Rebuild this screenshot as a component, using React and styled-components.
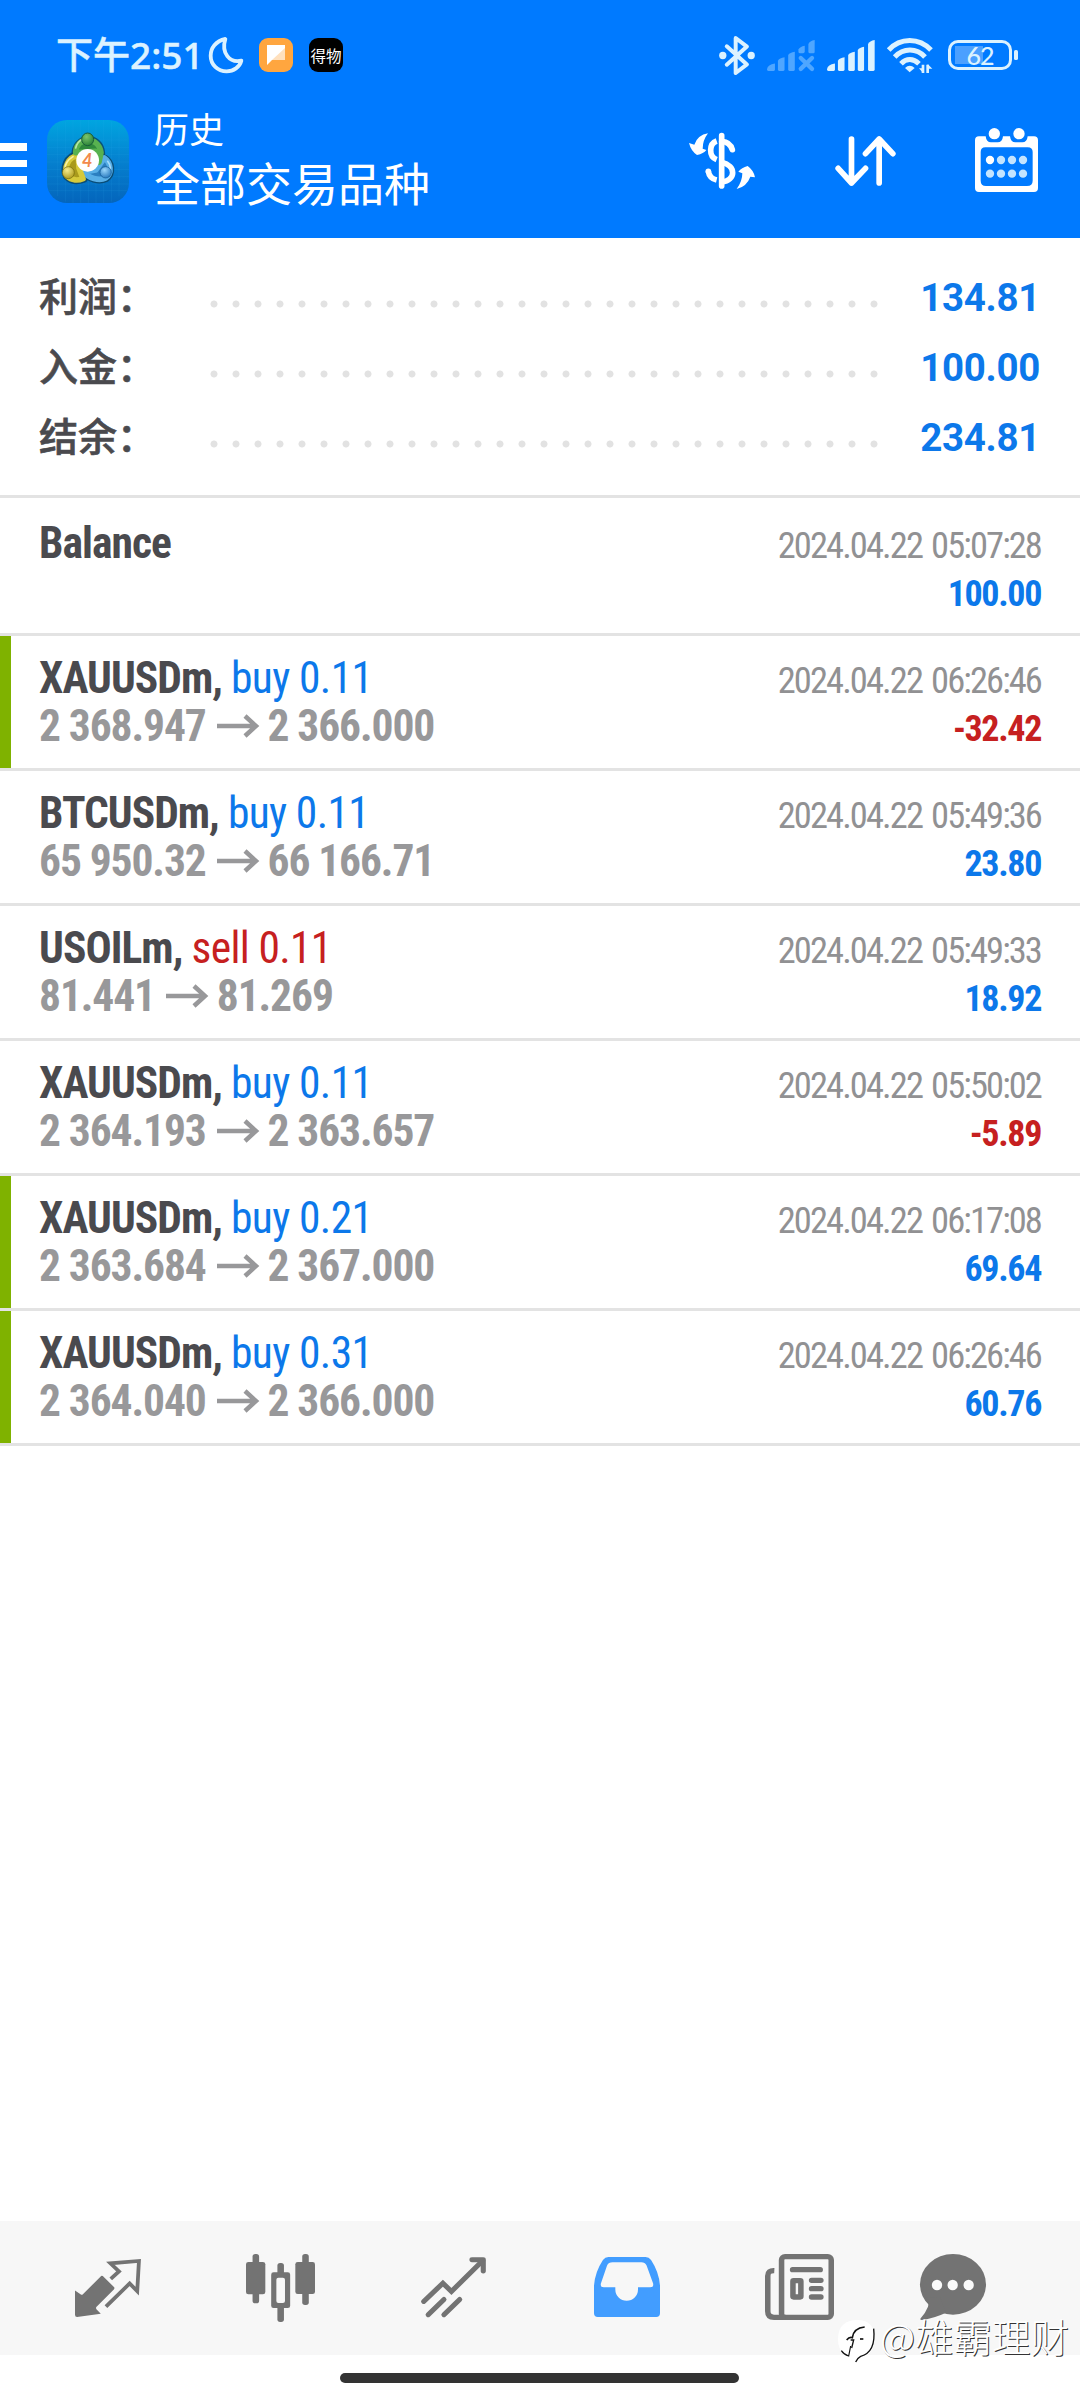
import styled, { createGlobalStyle, css } from 'styled-components';

const GlobalStyle = createGlobalStyle`
  * {
    box-sizing: border-box;
  }
  body {
    margin: 0;
    background: #fff;
  }
  svg {
    display: block;
    flex: none;
    overflow: visible;
  }
`;

const condensed = css`
  font-family: "Roboto Condensed", Roboto, sans-serif;
  font-stretch: 75%;
`;

const Screen = styled.div`
  display: flex;
  flex-direction: column;
  width: 1080px;
  height: 2400px;
  background: #fff;
  overflow: hidden;
  font-family: Roboto, "Noto Sans CJK SC", sans-serif;
`;

const Header = styled.header`
  height: 238px;
  background: #007aff;
  color: #fff;
`;

const StatusBar = styled.div`
  display: flex;
  align-items: center;
  height: 110px;
  padding: 0 62px 0 56px;
`;

const Clock = styled.span`
  font-family: "Noto Sans", "Noto Sans CJK SC", sans-serif;
  font-size: 37px;
  font-weight: 500;
  line-height: 50px;
  color: #dcf2ff;
  -webkit-text-stroke: 0.5px #dcf2ff;
  width: 153px;
  white-space: nowrap;
`;

const Badge = styled.span`
  display: flex;
  align-items: center;
  justify-content: center;
  width: 34px;
  height: 34px;
  margin-left: 16px;
  border-radius: 9px;
  background: ${props => props.$color};
  color: #fff;
  font: 400 15.5px/34px "Noto Sans CJK SC", sans-serif;
`;

const StatusIcons = styled.div`
  display: flex;
  align-items: center;
  gap: 12px;
  margin-left: auto;
`;

const Battery = styled.div`
  display: flex;
  align-items: center;
  justify-content: center;
  width: 64px;
  height: 30px;
  margin: 0 2px 0 3px;
  border: 3px solid #dcf2ff;
  border-radius: 10px;
  background: linear-gradient(#4ba0ff, #4ba0ff) 4px center / 28px 18px no-repeat;
  color: #dcf2ff;
  font: 500 25px/24px Lato, sans-serif;
  letter-spacing: -1px;
`;

const Toolbar = styled.div`
  display: flex;
  align-items: flex-start;
  height: 128px;
  padding-right: 42px;
`;

const Burger = styled.div`
  display: flex;
  flex-direction: column;
  gap: 9px;
  width: 27px;
  margin: 33px 20px 0 0;

  span {
    height: 7.5px;
    background: #fff;
  }
`;

const Titles = styled.div`
  display: flex;
  flex-direction: column;
  margin: -5px auto 0 25px;
  font-family: "Noto Sans CJK SC", sans-serif;
`;

const Title = styled.div`
  font-size: ${props => props.$size}px;
  line-height: ${props => props.$line}px;
`;

const Tool = styled.div`
  margin: ${props => props.$top}px 0 0 ${props => props.$gap}px;
`;

const Summary = styled.section`
  height: 257px;
  padding: 24px 40px 0 39px;
`;

const SummaryRow = styled.div`
  display: flex;
  align-items: center;
  height: 70px;
`;

const SummaryLabel = styled.span`
  width: 164px;
  padding-bottom: 5px;
  font-family: "Noto Sans CJK SC", sans-serif;
  font-size: 39px;
  font-weight: 500;
  line-height: 65px;
  color: #4a4a4e;
  -webkit-text-stroke: 0.6px #4a4a4e;
`;

const Dots = styled.span`
  width: 682px;
  height: 22px;
  margin-top: 13px;
  background: radial-gradient(circle, #e2e2e2 3.1px, transparent 3.9px) 0 0 / 22px 22px;
`;

const SummaryValue = styled.span`
  margin-left: auto;
  padding-top: 1px;
  font-size: 38.5px;
  font-weight: 700;
  letter-spacing: -0.3px;
  line-height: 69px;
  color: #0c78ea;
`;

const Deals = styled.section`
  flex: 1;
`;

const Divider = styled.div`
  height: 3px;
  background: #e3e3e3;
`;

const Deal = styled.div`
  display: flex;
  justify-content: space-between;
  height: ${props => (props.$first ? 135 : 132)}px;
  padding: ${props => (props.$first ? 21 : 18)}px 39px 0 28px;
  border-left: 11px solid ${props => (props.$marked ? '#7fb200' : 'transparent')};
`;

const DealLine = styled.div`
  ${condensed}
  display: flex;
  align-items: center;
  height: 48px;
  font-size: 43.5px;
  font-weight: 700;
  letter-spacing: ${props => props.$spacing}px;
  line-height: 47px;
  color: ${props => props.$color};
  white-space: pre;
`;

const Volume = styled.span`
  font-weight: 400;
  letter-spacing: -0.65px;
  color: ${props => (props.$type === 'sell' ? '#c62020' : '#0c78ea')};
`;

const DealRight = styled.div`
  ${condensed}
  padding-top: 3px;
  font-size: 36.5px;
  letter-spacing: -1.9px;
  word-spacing: 2.5px;
  line-height: 48px;
  text-align: right;
  color: #919193;
`;

const Amount = styled.div`
  font-size: 36px;
  font-weight: 700;
  letter-spacing: -1.35px;
  color: ${props => (props.$negative ? '#c62020' : '#0c78ea')};
`;

const TabBar = styled.nav`
  display: flex;
  height: 134px;
  padding-left: 21px;
  background: #f7f7f7;
`;

const Tab = styled.div`
  display: flex;
  justify-content: center;
  width: ${props => props.$width || 173}px;
  padding-top: ${props => props.$top}px;
`;

const HomeArea = styled.div`
  display: flex;
  justify-content: center;
  height: 45px;
  padding: 18px 2px 0 0;

  span {
    width: 399px;
    height: 10px;
    border-radius: 5px;
    background: #333;
  }
`;

const Watermark = styled.div`
  position: absolute;
  left: 838px;
  top: 2306px;
  display: flex;
  align-items: center;
  gap: 4px;
  font: 300 38.5px/52px "Noto Sans CJK SC", sans-serif;
  color: #fff;
  text-shadow: 1px 1px 0 #333;
  white-space: nowrap;

  svg {
    margin-top: 14px;
  }
`;

const summary = [
  { label: '利润：', value: '134.81' },
  { label: '入金：', value: '100.00' },
  { label: '结余：', value: '234.81' },
];

const deals = [
  { symbol: 'Balance', time: '2024.04.22 05:07:28', amount: '100.00' },
  { symbol: 'XAUUSDm', type: 'buy', volume: '0.11', open: '2 368.947', close: '2 366.000', time: '2024.04.22 06:26:46', amount: '-32.42', marked: true },
  { symbol: 'BTCUSDm', type: 'buy', volume: '0.11', open: '65 950.32', close: '66 166.71', time: '2024.04.22 05:49:36', amount: '23.80' },
  { symbol: 'USOILm', type: 'sell', volume: '0.11', open: '81.441', close: '81.269', time: '2024.04.22 05:49:33', amount: '18.92' },
  { symbol: 'XAUUSDm', type: 'buy', volume: '0.11', open: '2 364.193', close: '2 363.657', time: '2024.04.22 05:50:02', amount: '-5.89' },
  { symbol: 'XAUUSDm', type: 'buy', volume: '0.21', open: '2 363.684', close: '2 367.000', time: '2024.04.22 06:17:08', amount: '69.64', marked: true },
  { symbol: 'XAUUSDm', type: 'buy', volume: '0.31', open: '2 364.040', close: '2 366.000', time: '2024.04.22 06:26:46', amount: '60.76', marked: true },
];

const MoonIcon = () => (
  <svg width="34" height="36" viewBox="0 0 102 108" fill="none" stroke="#dcf2ff" strokeWidth="11.5" strokeLinejoin="round">
    <path d="M49 6 C20 12 5 34 5 56 C5 83 26 103 53 103 C74 103 92 90 97 71 C62 79 36 48 49 6Z" />
  </svg>
);

const BluetoothIcon = () => (
  <svg width="36" height="39" viewBox="0 0 108 118" fill="none" stroke="#dcf2ff" strokeWidth="12" strokeLinejoin="round" strokeLinecap="round">
    <path d="M23 31 L84 86 L50 112 V6 L84 32 L23 87" />
    <circle cx="11" cy="59" r="11" fill="#dcf2ff" stroke="none" />
    <circle cx="97" cy="59" r="11" fill="#dcf2ff" stroke="none" />
  </svg>
);

const SignalIcon = ({ off }) => (
  <svg width="48" height="31" viewBox="0 0 145 93" fill={off ? '#4fa6ff' : '#dcf2ff'}>
    <path d="M0 88 Q2 74 24 71 V89 Q24 93 20 93 H4 Q0 93 0 88Z" />
    <path d="M33 62 Q38 54 53 52 V89 Q53 93 49 93 H37 Q33 93 33 89Z" />
    <path d="M64 45 Q69 37 84 35 V89 Q84 93 80 93 H68 Q64 93 64 89Z" />
    {off ? (
      <>
        <path d="M95 28 Q99 20 114 17 V34 Q114 40 109 40 H100 Q95 40 95 35Z" />
        <path d="M125 12 Q129 3 144 0 V35 Q144 40 140 40 H130 Q125 40 125 35Z" />
        <path d="M102 54 L136 87 M136 54 L102 87" stroke="#4fa6ff" strokeWidth="13" strokeLinecap="round" />
      </>
    ) : (
      <>
        <path d="M93 30 Q98 22 112 20 V89 Q112 93 108 93 H97 Q93 93 93 89Z" />
        <path d="M124 12 Q129 3 144 0 V89 Q144 93 140 93 H128 Q124 93 124 89Z" />
      </>
    )}
  </svg>
);

const WifiIcon = () => (
  <svg width="46" height="35" viewBox="0 0 138 105" fill="none" stroke="#dcf2ff" strokeWidth="15">
    <path d="M5 36 C40 -2 96 -2 132 36" />
    <path d="M23 57 C49 29 89 29 114 57" />
    <path d="M42 77 C58 60 79 60 96 77" />
    <path d="M54 90 Q68 76 83 90 L68 103Z" fill="#dcf2ff" stroke="none" />
    <path d="M108 80 V105 M122 80 V105" strokeWidth="8" />
    <path d="M96 91 H108 V105Z M122 78 L136 92 H122Z" fill="#dcf2ff" stroke="none" />
  </svg>
);

const BatteryTip = () => (
  <svg width="4" height="10" viewBox="0 0 4 10">
    <rect width="4" height="10" rx="1.6" fill="#dcf2ff" />
  </svg>
);

const ChatBadgeIcon = () => (
  <svg width="20" height="20" viewBox="0 0 20 20">
    <path d="M1 0 H19 V15 H6 L1 20Z" fill="#fff" />
    <path d="M19 3 V15 H6Z" fill="#ffe0bd" />
  </svg>
);

const LogoIcon = () => (
  <svg width="82" height="83" viewBox="0 0 246 249">
    <defs>
      <linearGradient id="logoBg" x1="0.5" y1="0" x2="0.5" y2="1">
        <stop offset="0" stopColor="#00a5e0" />
        <stop offset="0.5" stopColor="#0580cf" />
        <stop offset="1" stopColor="#0465bc" />
      </linearGradient>
      <radialGradient id="logoGreen" cx="0.4" cy="0.3" r="0.8">
        <stop offset="0" stopColor="#7cc56c" />
        <stop offset="1" stopColor="#1f7a31" />
      </radialGradient>
      <radialGradient id="logoYellow" cx="0.4" cy="0.3" r="0.8">
        <stop offset="0" stopColor="#f6ec8c" />
        <stop offset="1" stopColor="#a89312" />
      </radialGradient>
      <radialGradient id="logoBlue" cx="0.4" cy="0.3" r="0.8">
        <stop offset="0" stopColor="#9ad6fb" />
        <stop offset="1" stopColor="#1a6fb8" />
      </radialGradient>
    </defs>
    <rect width="246" height="249" rx="60" fill="url(#logoBg)" />
    <path
      d="M32 20 V229 M55 4 V245 M78 0 V249 M101 0 V249 M124 0 V249 M147 0 V249 M170 0 V249 M193 4 V245 M216 20 V229 M4 60 H242 M0 82 H246 M0 104 H246 M0 126 H246 M0 148 H246 M0 170 H246 M0 192 H246 M6 212 H240"
      stroke="#3fb6ee"
      strokeOpacity="0.18"
      strokeWidth="2"
    />
    <g strokeWidth="17" strokeLinecap="round" strokeLinejoin="round">
      <g stroke="#0b4262" strokeOpacity="0.8" strokeWidth="25" fill="none">
        <path d="M86 104 C84 50 158 44 162 100 L158 126" />
        <path d="M94 104 C58 112 50 144 60 168 C74 182 94 182 110 176" />
        <path d="M172 116 C192 128 196 160 176 174 C156 184 124 174 112 156" />
      </g>
      <path d="M172 114 C192 128 196 160 176 174 C156 184 124 174 110 156 L146 150Z" stroke="#57aee6" fill="#2b7fc0" />
      <path d="M94 106 C62 112 50 144 60 168 C74 182 94 182 108 176 L96 144Z" stroke="#d6c93a" fill="#a99a1c" />
      <path d="M86 98 C86 50 156 46 162 98 L156 126 L146 94Z" stroke="#58b150" fill="#2f8a3c" />
      <g fill="none" strokeWidth="5">
        <path d="M86 84 C90 68 98 62 106 58" stroke="#b7e6a6" />
        <path d="M78 110 C62 120 54 134 54 146" stroke="#f7f0a4" />
        <path d="M182 124 C192 136 192 152 186 162" stroke="#a8dcfb" />
      </g>
    </g>
    <ellipse cx="122" cy="58" rx="18" ry="19" fill="url(#logoGreen)" stroke="#1a5d3a" strokeWidth="3" />
    <circle cx="64" cy="158" r="18" fill="url(#logoYellow)" stroke="#71680e" strokeWidth="2" />
    <circle cx="176" cy="157" r="17" fill="url(#logoBlue)" stroke="#11568f" strokeWidth="2" />
    <circle cx="122" cy="121" r="34" fill="#fff" />
    <text x="121" y="140" textAnchor="middle" fontFamily="Lato, sans-serif" fontWeight="700" fontStyle="italic" fontSize="54" fill="#f28a4c">4</text>
  </svg>
);

const CurrencyIcon = () => (
  <svg width="66" height="56" viewBox="0 0 198 168" fill="none" stroke="#fff" strokeWidth="17">
    <path d="M98 8 V159" strokeLinecap="round" />
    <path d="M83 24 C60 32 58 70 83 80" />
    <path d="M98 25 C114 26 126 36 130 50" strokeLinecap="round" />
    <path d="M98 88 C142 98 142 142 98 147" />
    <path d="M58 115 C60 128 70 138 83 141" />
    <circle cx="58" cy="115" r="8.5" fill="#fff" stroke="none" />
    <path d="M57 1 Q41 22 41 47 L52 51 Q44 62 24 66 Q6 54 0 30 L16 35 Q26 6 57 1Z" fill="#fff" stroke="none" />
    <path d="M143 168 Q160 145 160 121 L148 116 Q158 104 176 99 Q194 112 198 133 L184 131 Q174 160 143 168Z" fill="#fff" stroke="none" />
  </svg>
);

const SortIcon = () => (
  <svg width="61" height="50" viewBox="0 0 182 150" fill="none" stroke="#fff" strokeWidth="17" strokeLinecap="round" strokeLinejoin="round">
    <path d="M49 9 V141 M9 97 L49 141 L91 97" />
    <path d="M132 141 V9 M91 53 L132 9 L173 53" />
  </svg>
);

const CalendarIcon = () => (
  <svg width="63" height="64" viewBox="0 0 189 192">
    <path
      fillRule="evenodd"
      d="M12 25 H32 Q34 43 48 43 H68 Q82 43 84 25 H105 Q107 43 121 43 H142 Q156 43 158 25 H177 Q189 25 189 37 V180 Q189 192 177 192 H12 Q0 192 0 180 V37 Q0 25 12 25Z M31 58 Q17 58 17 72 V158 Q17 174 33 174 H156 Q173 174 173 158 V72 Q173 58 158 58Z"
      fill="#fff"
    />
    <circle cx="58" cy="17" r="17" fill="#fff" />
    <circle cx="132" cy="17" r="17" fill="#fff" />
    {[96, 137].map(cy => [45, 78, 111, 144].map(cx => (
      <circle key={`${cx}-${cy}`} cx={cx} cy={cy} r="12.5" fill={cx === 45 && cy === 96 ? '#fff' : '#c3e4ff'} />
    )))}
  </svg>
);

const PriceArrow = () => (
  <svg width="44" height="22" viewBox="0 0 44 22" fill="none" stroke="#98989a" strokeWidth="4.5">
    <path d="M2 11 H41 M30 1 L41 11 L30 21" />
  </svg>
);

const QuotesIcon = () => (
  <svg width="66" height="58" viewBox="0 0 192 173" preserveAspectRatio="none" fill="#737373">
    <path d="M78 50 Q81 50 83 53 L114 84 Q116 87 113 91 L62 143 Q60 147 63 151 L75 163 L6 173 Q0 173 0 166 V94 L17 106 Q20 108 23 105 L74 53 Q76 50 78 50Z" />
    <path d="M104 59 L128 37 L103 13 L186 6 L181 96 L159 73 L90 142" fill="none" stroke="#737373" strokeWidth="11" />
  </svg>
);

const CandlesIcon = () => (
  <svg width="69" height="68" viewBox="0 0 200 204" preserveAspectRatio="none" fill="#737373">
    <rect x="19" width="19" height="148" rx="8" />
    <rect y="24" width="56" height="97" rx="7" />
    <rect x="163" width="19" height="153" rx="8" />
    <rect x="143" y="24" width="57" height="96" rx="7" />
    <rect x="91" y="27" width="19" height="177" rx="8" />
    <rect x="73" y="55" width="55" height="107" rx="7" />
    <rect x="88" y="71" width="25" height="76" rx="6" fill="#f7f7f7" />
  </svg>
);

const TrendIcon = () => (
  <svg width="65" height="60" viewBox="0 0 190 181" preserveAspectRatio="none" fill="none" stroke="#737373" strokeWidth="15" strokeLinecap="round">
    <path d="M8 134 L64 79 L89 104 L180 11" />
    <path d="M149 8 H182 V42" strokeLinejoin="round" />
    <path d="M21 174 L67 128 M67 174 L113 128" />
  </svg>
);

const InboxIcon = () => (
  <svg width="66" height="60" viewBox="0 0 192 181" preserveAspectRatio="none">
    <path
      fillRule="evenodd"
      d="M42 0 H150 Q160 0 166 9 Q189 45 192 86 V170 Q192 181 181 181 H11 Q0 181 0 170 V86 Q3 45 26 9 Q32 0 42 0Z M54 16 Q42 16 38 26 L20 80 Q18 91 28 91 H62 V98 A33 34 0 0 0 128 98 V91 H164 Q174 91 172 80 L153 26 Q148 16 138 16Z"
      fill="#429dff"
    />
  </svg>
);

const NewsIcon = () => (
  <svg width="69" height="66" viewBox="0 0 200 198" preserveAspectRatio="none" fill="none" stroke="#737373" strokeWidth="16">
    <rect x="48" y="8" width="144" height="182" rx="10" />
    <path d="M27 50 Q8 49 8 66 V172 Q8 190 26 190 H60" />
    <path d="M80 47 H160 M135 79 H162 M135 104 H162 M135 129 H162" strokeLinecap="round" />
    <rect x="81" y="80" width="23" height="49" rx="2" />
  </svg>
);

const ChatIcon = () => (
  <svg width="66" height="66" viewBox="0 0 198 198">
    <ellipse cx="99" cy="91" rx="99" ry="91" fill="#737373" />
    <path d="M16 132 Q30 145 24 158 Q16 178 1 194 Q0 198 5 198 Q42 193 78 176 L60 130Z" fill="#737373" />
    {[51, 98, 146].map(cx => (
      <circle key={cx} cx={cx} cy="93" r="15.5" fill="#fafafa" />
    ))}
  </svg>
);

const WatermarkIcon = () => (
  <svg width="38" height="44" viewBox="0 0 114 132" fill="none">
    <path d="M58 0 C95 0 109 20 109 54 C109 90 96 107 68 110 Q60 116 54 127 L58 112 C20 112 0 95 0 58 C0 18 22 0 58 0Z" fill="#fff" />
    <path d="M107 26 C112 72 102 100 68 109 Q58 114 53 126" stroke="#111" strokeWidth="4" />
    <path d="M10 92 Q18 104 32 108 L38 78" stroke="#111" strokeWidth="3.5" />
    <path d="M26 60 Q34 50 43 53 Q47 24 80 21" stroke="#111" strokeWidth="5" />
    <path d="M38 60 H47 L41 84" stroke="#111" strokeWidth="4" />
    <path d="M66 57 H76" stroke="#111" strokeWidth="5" />
  </svg>
);

const tabs = [
  { Icon: QuotesIcon, top: 38 },
  { Icon: CandlesIcon, top: 33 },
  { Icon: TrendIcon, top: 36 },
  { Icon: InboxIcon, top: 36 },
  { Icon: NewsIcon, top: 33 },
  { Icon: ChatIcon, top: 33, width: 133 },
];

const DealRow = ({ deal, first }) => (
  <>
    <Deal $first={first} $marked={deal.marked}>
      <div>
        <DealLine $color="#4a4a4e" $spacing={-0.95}>
          {deal.type ? `${deal.symbol}, ` : deal.symbol}
          {deal.type && <Volume $type={deal.type}>{`${deal.type} ${deal.volume}`}</Volume>}
        </DealLine>
        {deal.open && (
          <DealLine $color="#98989a" $spacing={-1.1}>
            {`${deal.open} `}
            <PriceArrow />
            {` ${deal.close}`}
          </DealLine>
        )}
      </div>
      <DealRight>
        <div>{deal.time}</div>
        <Amount $negative={deal.amount.startsWith('-')}>{deal.amount}</Amount>
      </DealRight>
    </Deal>
    <Divider />
  </>
);

const App = () => (
  <Screen>
    <GlobalStyle />
    <Header>
      <StatusBar>
        <Clock>下午2:51</Clock>
        <MoonIcon />
        <Badge $color="#ffa63f"><ChatBadgeIcon /></Badge>
        <Badge $color="#000">得物</Badge>
        <StatusIcons>
          <BluetoothIcon />
          <SignalIcon off />
          <SignalIcon />
          <WifiIcon />
          <Battery>62</Battery>
        </StatusIcons>
        <BatteryTip />
      </StatusBar>
      <Toolbar>
        <Burger>
          <span />
          <span />
          <span />
        </Burger>
        <Tool $top={10} $gap={0}><LogoIcon /></Tool>
        <Titles>
          <Title $size={35} $line={45}>历史</Title>
          <Title $size={46} $line={63}>全部交易品种</Title>
        </Titles>
        <Tool $top={23} $gap={0}><CurrencyIcon /></Tool>
        <Tool $top={26} $gap={80}><SortIcon /></Tool>
        <Tool $top={18} $gap={79}><CalendarIcon /></Tool>
      </Toolbar>
    </Header>
    <Summary>
      {summary.map(item => (
        <SummaryRow key={item.label}>
          <SummaryLabel>{item.label}</SummaryLabel>
          <Dots />
          <SummaryValue>{item.value}</SummaryValue>
        </SummaryRow>
      ))}
    </Summary>
    <Divider />
    <Deals>
      {deals.map((deal, i) => (
        <DealRow key={i} deal={deal} first={i === 0} />
      ))}
    </Deals>
    <TabBar>
      {tabs.map(({ Icon, top, width }, i) => (
        <Tab key={i} $top={top} $width={width}>
          <Icon />
        </Tab>
      ))}
    </TabBar>
    <HomeArea><span /></HomeArea>
    <Watermark>
      <WatermarkIcon />
      @雄霸理财
    </Watermark>
  </Screen>
);

export default App;
